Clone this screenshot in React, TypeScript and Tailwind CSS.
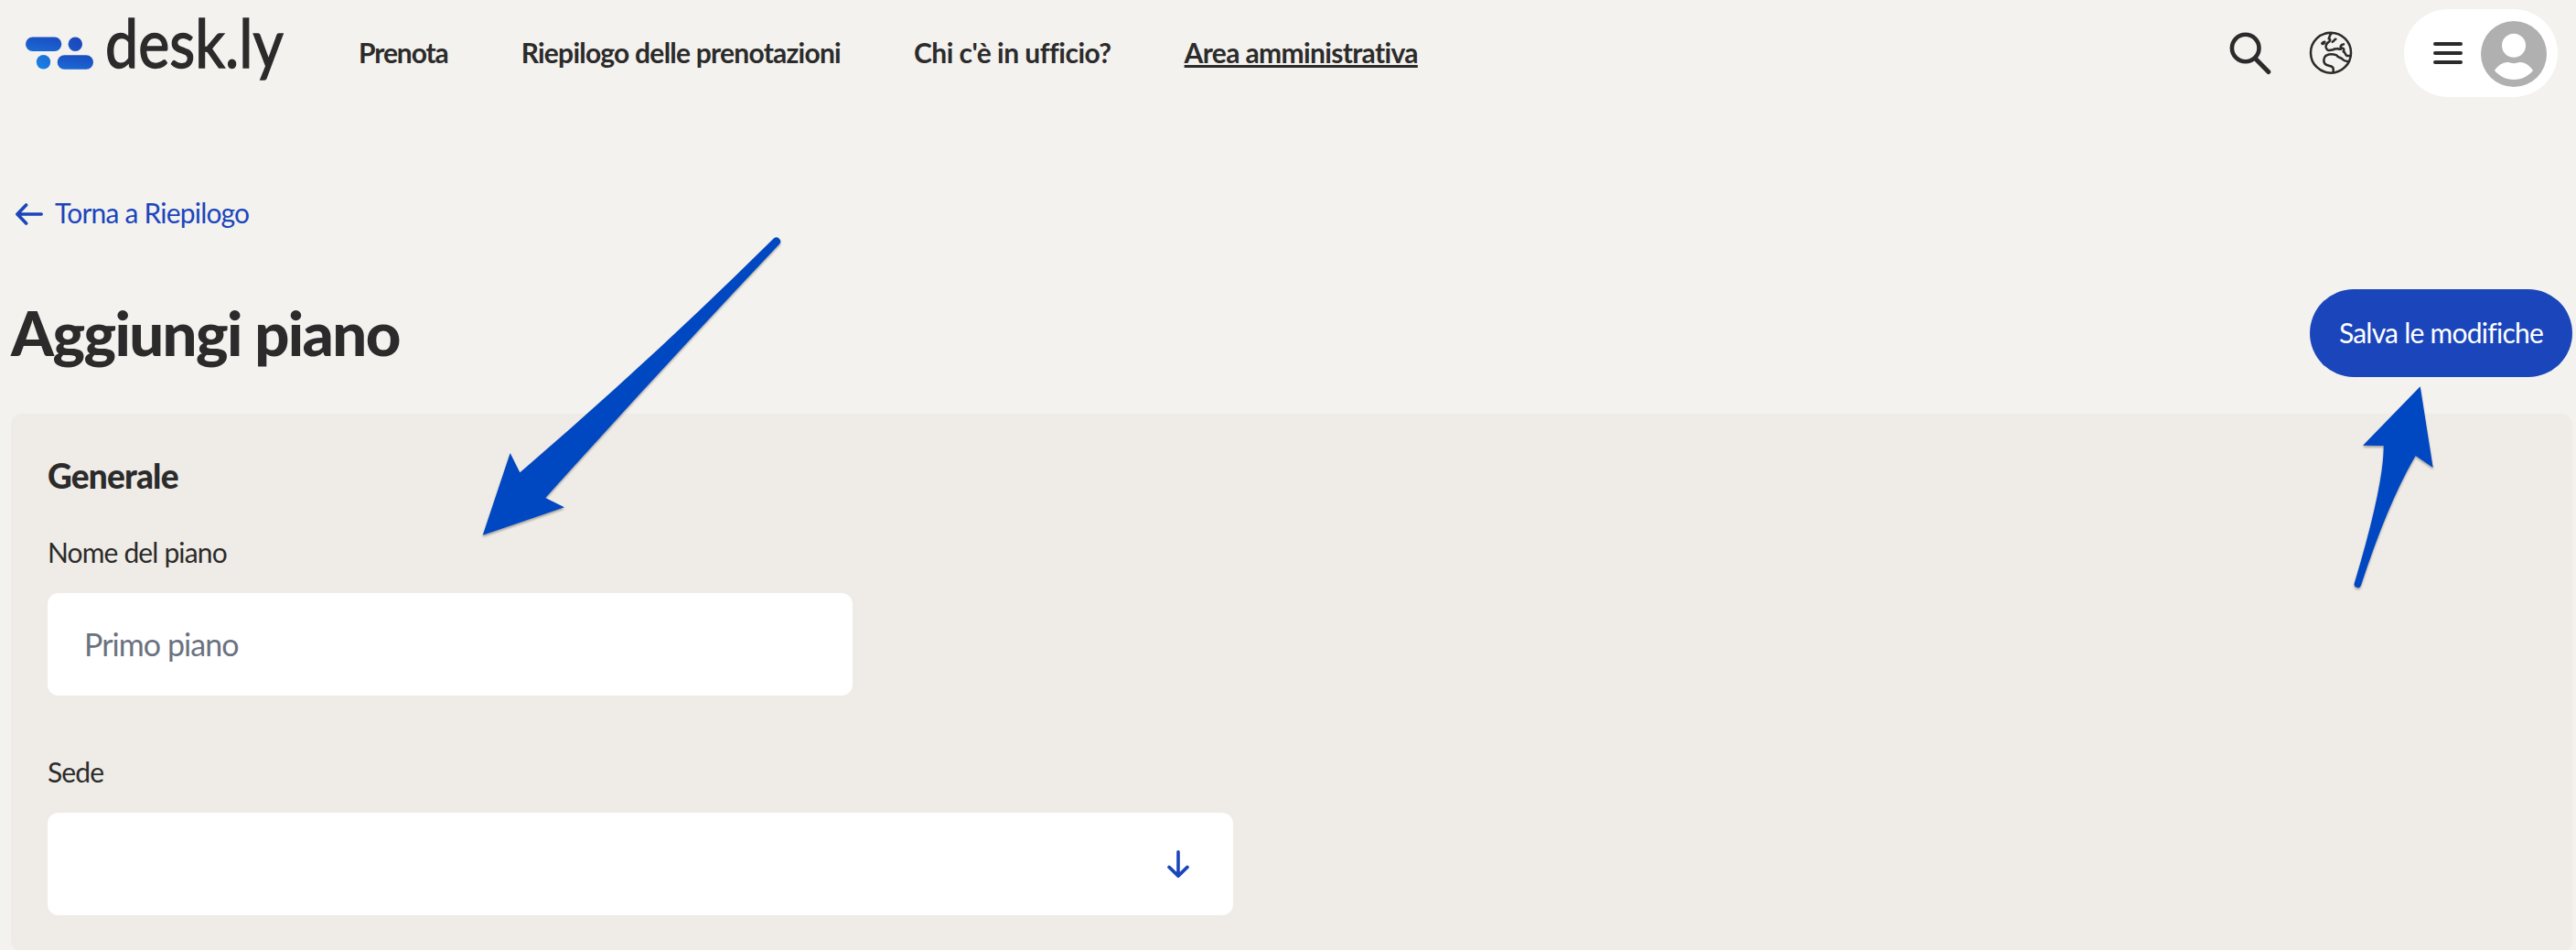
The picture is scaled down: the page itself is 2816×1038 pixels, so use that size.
import { useState } from "react";

const navItems = [
  { label: "Prenota", className: "tracking-[-1.1px]" },
  { label: "Riepilogo delle prenotazioni", className: "tracking-[-0.76px]" },
  { label: "Chi c'è in ufficio?", className: "tracking-[-0.5px]" },
  {
    label: "Area amministrativa",
    className:
      "tracking-[-0.65px] underline decoration-[3px] underline-offset-[2px]",
  },
];

const Logo = () => (
  <div className="flex items-center w-[284px]">
    <svg className="flex-none" width="74" height="80" viewBox="0 0 74 80">
      <defs>
        <linearGradient
          id="logo-blue"
          gradientUnits="userSpaceOnUse"
          x1="54"
          y1="20"
          x2="16"
          y2="58"
        >
          <stop offset="0" stopColor="#1b46bb" />
          <stop offset="1" stopColor="#1a80e4" />
        </linearGradient>
        <linearGradient id="logo-bar" x1="0" y1="1" x2="0.4" y2="0">
          <stop offset="0" stopColor="#1a6bd6" />
          <stop offset="1" stopColor="#1b50c3" />
        </linearGradient>
      </defs>
      <rect x="0" y="22.5" width="39.3" height="15.4" rx="7.7" fill="url(#logo-bar)" />
      <circle cx="54.3" cy="30.3" r="7.7" fill="url(#logo-blue)" />
      <circle cx="19.5" cy="49.8" r="7.7" fill="url(#logo-blue)" />
      <rect x="34.7" y="42.3" width="39.3" height="15.4" rx="7.7" fill="url(#logo-bar)" />
    </svg>
    <span className="flex-none ml-[13px] pb-6 origin-left scale-x-[0.885] text-[73px] leading-[88px] [-webkit-text-stroke:1.4px_#2b2b2b]">
      desk.ly
    </span>
  </div>
);

const SearchIcon = () => (
  <svg width="48" height="48" viewBox="0 0 48 48" fill="none" stroke="#2b2b2b">
    <circle cx="19.7" cy="18.5" r="14.8" strokeWidth="4.6" />
    <path d="M31 30.5 L44.8 44.5" strokeWidth="5" strokeLinecap="round" />
  </svg>
);

const GlobeIcon = () => (
  <svg
    width="48"
    height="48"
    viewBox="42 30 144 144"
    fill="none"
    stroke="#2b2b2b"
    strokeWidth="7.6"
    strokeLinecap="round"
    strokeLinejoin="round"
  >
    <circle cx="114" cy="101" r="66" />
    <path d="M85 70 L90 66 L94 65 L92 70 L87 72 Z" />
    <path d="M116 38 C109 42 111 49 107 55 C113 56 113 61 108 65 C100 70 97 76 98 83 C100 92 106 94 113 92 L123 91 C126 84 131 92 135 87 C141 88 142 92 148 88 C145 82 145 78 150 75 L156 73" />
    <path d="M130 56 C125 57 126 63 119 65" />
    <path d="M148 85 C158 86 159 91 155 97 C162 99 160 108 167 111 L177 111" />
    <path d="M122 165 L122 153 C121 142 108 146 98 140 C88 134 89 116 99 110 C109 105 124 106 133 109 C138 118 146 116 151 121 C156 128 162 129 173 130" />
  </svg>
);

const Avatar = () => (
  <svg width="72" height="72" viewBox="0 0 72 72">
    <circle cx="36" cy="36" r="36" fill="#b0b0b0" />
    <circle cx="36" cy="26.7" r="13" fill="#fff" />
    <path
      d="M15 54 C18 49.5 23 45 29.5 45 C32 45 33.5 46.3 36 46.3 C38.5 46.3 40 45 43 45 C49 45 54 49.5 57 54 C52 60 45 64 36 64 C27 64 20 60 15 54 Z"
      fill="#fff"
    />
  </svg>
);

const ArrowIcon = ({ className }: { className?: string }) => (
  <svg
    width="30"
    height="24"
    viewBox="0 0 30 24"
    fill="none"
    stroke="#1b46bb"
    strokeWidth="3.6"
    strokeLinecap="round"
    strokeLinejoin="round"
    className={className}
  >
    <path d="M28.2 12 H2.2 M11.6 2 L1.9 12 L11.6 22" />
  </svg>
);

// hint arrows drawn over the page
const Pointers = () => (
  <svg
    width="2816"
    height="1038"
    viewBox="0 0 2816 1038"
    fill="#0047c2"
    className="absolute left-0 top-0 pointer-events-none drop-shadow-[0_2px_1px_rgba(0,0,0,0.3)]"
  >
    <path d="M527.7 584.7 L557.7 495 L568.3 516.3 Q712 393 845.8 260.6 A4.4 4.4 0 0 1 852.2 266.6 Q723 403 596.3 544 L617 554.3 Z" />
    <path d="M2645.7 422.3 L2583 486.7 L2605.7 487 Q2606 530 2573.8 637 A3.8 3.8 0 0 0 2581 639.5 Q2611 548 2640.7 498 L2659.7 511 Z" />
  </svg>
);

const App = () => {
  const [name, setName] = useState("");

  return (
    <div className="relative h-[1038px] overflow-hidden bg-[#f4f2ee] text-[#2b2b2b] text-[30px] leading-[40px] font-['Lato',sans-serif]">
      <header className="flex items-center h-[116px] pl-7 pr-5">
        <Logo />
        <nav className="flex items-center gap-20 ml-20 pb-0.5 font-bold whitespace-nowrap">
          {navItems.map((item) => (
            <a key={item.label} href="#" className={item.className}>
              {item.label}
            </a>
          ))}
        </nav>
        <div className="flex-1"></div>
        <button className="mr-[41px]">
          <SearchIcon />
        </button>
        <button className="mr-14">
          <GlobeIcon />
        </button>
        <button className="flex items-center gap-5 w-[168px] h-24 pl-8 pt-0.5 rounded-full bg-white">
          <span className="flex flex-col gap-1.5 w-8 pb-0.5">
            <span className="h-1 rounded-full bg-[#2b2b2b]"></span>
            <span className="h-1 rounded-full bg-[#2b2b2b]"></span>
            <span className="h-1 rounded-full bg-[#2b2b2b]"></span>
          </span>
          <Avatar />
        </button>
      </header>

      <main className="pl-3 pr-1 pt-24">
        <a href="#" className="flex items-center gap-[13px] pl-[5px] text-[#1b46bb]">
          <ArrowIcon className="mt-1" />
          <span className="tracking-[-0.8px]">Torna a Riepilogo</span>
        </a>

        <div className="flex items-center justify-between mt-16">
          <h1 className="pb-0.5 text-[67px] leading-[80px] font-black tracking-[-1.6px]">
            Aggiungi piano
          </h1>
          <button className="w-[287px] h-24 pb-0.5 rounded-full bg-[#1b46bb] text-white tracking-[-0.75px]">
            Salva le modifiche
          </button>
        </div>

        <section className="h-[588px] mt-10 px-10 pt-11 rounded-xl bg-[#efebe6]">
          <h2 className="text-[37px] leading-[48px] font-black tracking-[-0.8px]">
            Generale
          </h2>

          <label className="block mt-[39px] tracking-[-0.85px]">Nome del piano</label>
          <input
            value={name}
            onChange={(e) => setName(e.target.value)}
            placeholder="Primo piano"
            className="block w-[880px] h-28 mt-[25px] px-10 pb-0.5 rounded-xl bg-white text-[34px] tracking-[-0.95px] placeholder:text-[#6b7280]"
          />

          <label className="block mt-[63px] tracking-[-0.9px]">Sede</label>
          <button className="flex items-center justify-end w-[1296px] h-28 mt-[25px] pr-[45px] rounded-xl bg-white">
            <ArrowIcon className="-rotate-90" />
          </button>
        </section>
      </main>

      <Pointers />
    </div>
  );
};

export default App;
